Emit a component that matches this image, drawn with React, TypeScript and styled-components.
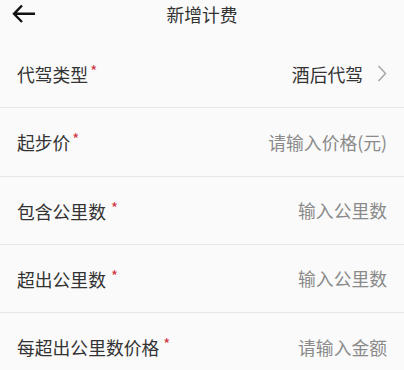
import React from 'react'
import styled, { createGlobalStyle } from 'styled-components'

const GlobalStyle = createGlobalStyle`
  html, body {
    margin: 0;
    padding: 0;
    background: #fafafa;
  }
  body {
    font-family: "Noto Sans CJK SC", "Noto Sans", sans-serif;
    color: #333;
  }
`

const Page = styled.div`
  width: 404px;
  height: 370px;
  overflow: hidden;
  background: #fafafa;
`
const Header = styled.header`
  display: grid;
  grid-template-columns: 48px 1fr 48px;
  align-items: center;
  height: 28px;
`
const BackButton = styled.button`
  display: flex;
  align-items: center;
  padding: 0 0 0 12px;
  border: none;
  background: none;
  height: 28px;
  cursor: pointer;
`
const Title = styled.h1`
  margin: 0;
  text-align: center;
  font-size: 17.8px;
  font-weight: 400;
  color: #333;
`
const List = styled.ul`
  list-style: none;
  margin: 12px 0 0;
  padding: 0;
`
const Row = styled.li`
  display: flex;
  align-items: center;
  justify-content: space-between;
  height: 67.25px;
  padding: 0 17px;
  border-bottom: 1px solid #e6e6e6;
  font-size: 17.8px;
`
const Label = styled.div`
  color: #333;
  white-space: nowrap;
`
const Star = styled.span<{ $gap: number }>`
  margin-left: ${p => p.$gap}px;
  color: #d2343e;
  font-size: 15px;
  vertical-align: 5px;
`
const Value = styled.div<{ $placeholder?: boolean }>`
  display: flex;
  align-items: center;
  gap: 14px;
  color: ${p => (p.$placeholder ? '#8a8a8a' : '#333')};
`
const Chevron = () => (
  <svg width="10" height="17" viewBox="0 0 10 17" fill="none">
    <path d="M1.5 1 L8.5 8.5 L1.5 16" stroke="#a6a6a6" strokeWidth="1.5" />
  </svg>
)

const BackArrow = () => (
  <svg width="24" height="20" viewBox="0 0 24 20" fill="none">
    <path
      d="M10 1.5 L2 9.8 L10 18 M2 9.8 L23 9.8"
      stroke="#111"
      strokeWidth="2.4"
      strokeLinejoin="miter"
    />
  </svg>
)

type Field = {
  label: string
  gap: number
  value: string
  placeholder?: boolean
  select?: boolean
}

const fields: Field[] = [
  { label: '代驾类型', gap: 2, value: '酒后代驾', select: true },
  { label: '起步价', gap: 2, value: '请输入价格(元)', placeholder: true },
  { label: '包含公里数', gap: 5, value: '输入公里数', placeholder: true },
  { label: '超出公里数', gap: 5, value: '输入公里数', placeholder: true },
  { label: '每超出公里数价格', gap: 4, value: '请输入金额', placeholder: true },
]

export default function App() {
  return (
    <Page>
      <GlobalStyle />
      <Header>
        <BackButton aria-label="back">
          <BackArrow />
        </BackButton>
        <Title>新增计费</Title>
        <span />
      </Header>
      <List>
        {fields.map(f => (
          <Row key={f.label}>
            <Label>
              {f.label}
              <Star $gap={f.gap}>*</Star>
            </Label>
            <Value $placeholder={f.placeholder}>
              {f.value}
              {f.select && <Chevron />}
            </Value>
          </Row>
        ))}
      </List>
    </Page>
  )
}
